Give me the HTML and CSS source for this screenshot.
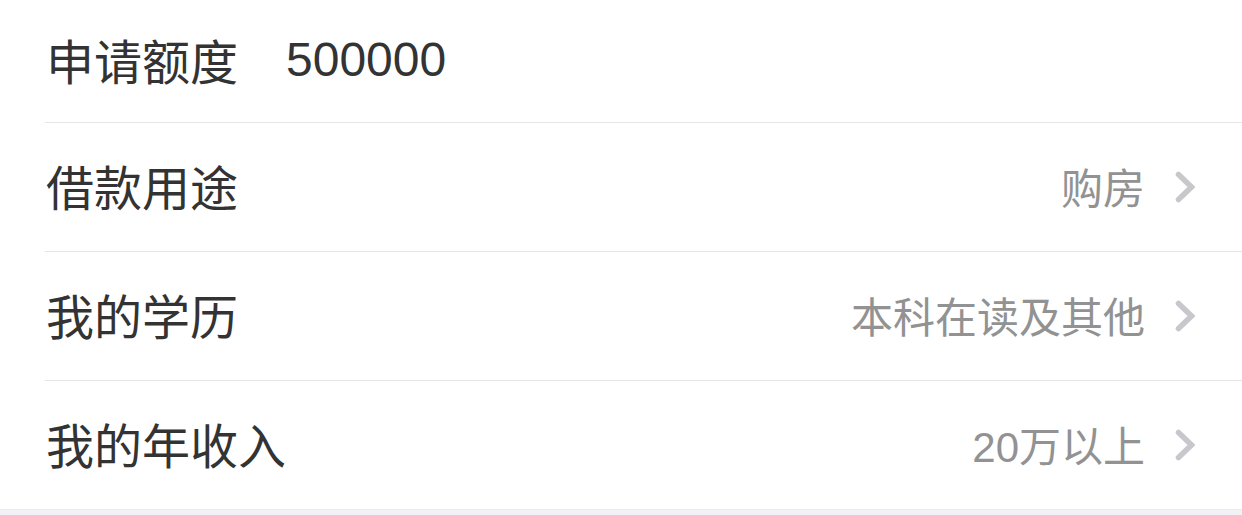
FILE: index.html
```html
<!DOCTYPE html>
<html lang="zh-CN">
<head>
<meta charset="utf-8">
<link rel="stylesheet" href="styles.css">
</head>
<body>
<div class="list">
  <div class="row row-first">
    <span class="label">申请额度</span>
    <span class="amount">500000</span>
  </div>
  <div class="row">
    <span class="label">借款用途</span>
    <span class="value">购房</span>
    <svg class="chev" viewBox="0 0 20 32" width="20" height="32"><polyline points="3.5,3.5 16.5,16 3.5,28.5" /></svg>
  </div>
  <div class="row">
    <span class="label">我的学历</span>
    <span class="value">本科在读及其他</span>
    <svg class="chev" viewBox="0 0 20 32" width="20" height="32"><polyline points="3.5,3.5 16.5,16 3.5,28.5" /></svg>
  </div>
  <div class="row row-last">
    <span class="label">我的年收入</span>
    <span class="value">20万以上</span>
    <svg class="chev" viewBox="0 0 20 32" width="20" height="32"><polyline points="3.5,3.5 16.5,16 3.5,28.5" /></svg>
  </div>
</div>
</body>
</html>
```

FILE: styles.css
```css
html, body {
  margin: 0;
  padding: 0;
  background: #f2f2f6;
  font-family: "Liberation Sans", "Noto Sans CJK SC", sans-serif;
}

.list {
  background: #ffffff;
  border-bottom: 1px solid #ebebeb;
}

.row {
  display: flex;
  align-items: center;
  height: 128px;
  margin-left: 45px;
  padding-left: 1px;
  padding-right: 47px;
  border-bottom: 1px solid #e6e6e6;
}

.row-first {
  height: 122px;
}

.row-last {
  border-bottom: none;
}

.label {
  font-size: 48px;
  color: #333333;
  white-space: nowrap;
  margin-top: -4px;
}

.amount {
  font-size: 48px;
  color: #333333;
  margin-left: 48px;
  margin-top: -4px;
}

.value {
  margin-left: auto;
  font-size: 42px;
  color: #929292;
  white-space: nowrap;
  margin-top: -4px;
}

.chev {
  margin-left: 30px;
  flex: none;
}

.chev polyline {
  fill: none;
  stroke: #c7c7cc;
  stroke-width: 5.5;
  stroke-linecap: round;
  stroke-linejoin: miter;
}
```
